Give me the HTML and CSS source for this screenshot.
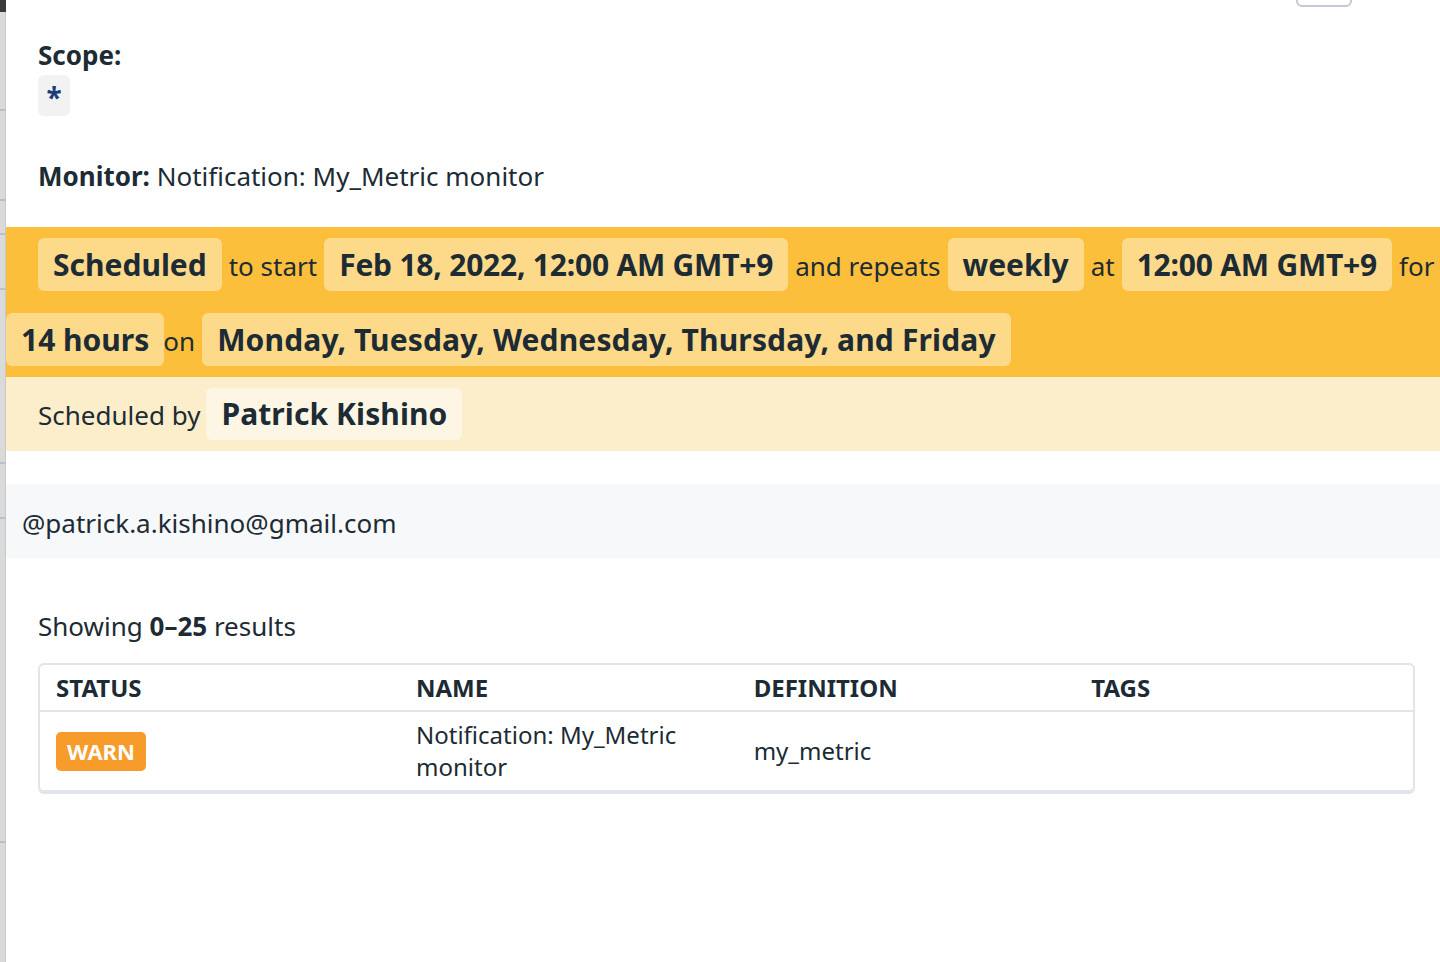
FILE: index.html
```html
<!DOCTYPE html>
<html>
	<head>
		<title>Downtime</title>
		<link rel="stylesheet" href="styles.css">
	</head>
	<body>
		<div class="rail">
			<div class="rail-top"></div>
			<div class="rail-seg" style="height: 97px"></div>
			<div class="rail-seg" style="height: 88px"></div>
			<div class="rail-seg" style="height: 32px"></div>
			<div class="rail-seg" style="height: 53px"></div>
			<div class="rail-seg" style="height: 172px"></div>
			<div class="rail-seg" style="height: 53px"></div>
			<div class="rail-seg" style="height: 322px"></div>
		</div>
		<div class="main">
			<div class="topbar">
				<div class="ghost-button"></div>
			</div>

			<div class="section">
				<div class="label">Scope:</div>
				<div class="scope-chip">*</div>
				<div class="monitor"><b>Monitor:</b> Notification: My_Metric monitor</div>
			</div>

			<div class="schedule">
				<div class="schedule-row first">
					<span class="chip">Scheduled</span>
					<span class="word">to start</span>
					<span class="chip tight">Feb 18, 2022, 12:00 AM GMT+9</span>
					<span class="word">and repeats</span>
					<span class="chip">weekly</span>
					<span class="word">at</span>
					<span class="chip tight">12:00 AM GMT+9</span>
					<span class="word">for</span>
				</div>
				<div class="schedule-row">
					<span class="chip">14 hours</span>
					<span class="word close">on</span>
					<span class="chip wide">Monday, Tuesday, Wednesday, Thursday, and Friday</span>
				</div>
			</div>
			<div class="scheduled-by">
				<span class="word">Scheduled by</span>
				<span class="chip light">Patrick Kishino</span>
			</div>

			<div class="message">@patrick.a.kishino@gmail.com</div>

			<div class="section list">
				<div class="results">Showing <b>0–25</b> results</div>
				<table class="monitors">
					<thead>
						<tr>
							<th class="col-status">Status</th>
							<th>Name</th>
							<th>Definition</th>
							<th>Tags</th>
						</tr>
					</thead>
					<tbody>
						<tr>
							<td><span class="badge warn">WARN</span></td>
							<td>Notification: My_Metric monitor</td>
							<td>my_metric</td>
							<td></td>
						</tr>
					</tbody>
				</table>
			</div>
		</div>
	</body>
</html>
```

FILE: styles.css
```css
html,
body {
	margin: 0;
	height: 100%;
}

body {
	display: flex;
	background-color: #fff;
	color: #1c2b34;
	font-family: "Noto Sans", "Open Sans", sans-serif;
	overflow: hidden;
}

.rail {
	width: 6px;
	flex: none;
	background-color: #dadada;
	box-shadow: inset -1px 0 0 #c9c9c9;
}

.rail-top {
	height: 12px;
	background-color: #3a3a3a;
}

.rail-seg {
	border-bottom: 2px solid #bcc0cc;
}

.main {
	flex: 1;
	min-width: 0;
	overflow: hidden;
}

.topbar {
	display: flex;
	justify-content: flex-end;
	height: 0;
}

.ghost-button {
	width: 52px;
	height: 30px;
	margin-top: -27px;
	margin-right: 88px;
	border: 2px solid #c5c9d5;
	border-radius: 6px;
}

.section {
	padding: 0 32px;
}

.section.list {
	padding-right: 25px;
}

.label {
	padding-top: 37px;
	font-size: 26px;
	line-height: 36px;
	font-weight: bold;
}

.scope-chip {
	width: 32px;
	height: 41px;
	margin-top: 2px;
	background-color: #f2f2f2;
	border-radius: 6px;
	color: #1a3b7c;
	font-size: 28px;
	font-weight: bold;
	line-height: 44px;
	text-align: center;
}

.monitor {
	margin-top: 42px;
	font-size: 26px;
	line-height: 36px;
}

.schedule {
	margin-top: 33px;
	padding: 11px 0;
	background-color: #fbbf3c;
}

.schedule-row {
	display: flex;
	align-items: baseline;
	gap: 7px;
	white-space: nowrap;
}

.schedule-row + .schedule-row {
	margin-top: 22px;
}

.schedule-row.first {
	padding-left: 32px;
}

.chip {
	display: inline-block;
	padding: 0 15px;
	background-color: #fdd98a;
	border-radius: 6px;
	font-size: 30px;
	font-weight: bold;
	line-height: 53px;
}

.chip.tight {
	letter-spacing: -0.22px;
}

.chip.wide {
	letter-spacing: 0.15px;
}

.chip.light {
	background-color: #fef6e4;
	line-height: 52px;
}

.word {
	font-size: 26px;
}

.word.close {
	margin-left: -8px;
}

.scheduled-by {
	display: flex;
	align-items: baseline;
	gap: 6px;
	padding: 11px 32px;
	background-color: #fdeecb;
}

.scheduled-by .chip {
	letter-spacing: 0.1px;
}

.message {
	margin-top: 33px;
	padding: 5px 16px 0;
	background-color: #f7f8fa;
	font-size: 26px;
	line-height: 69px;
}

.results {
	margin-top: 50px;
	font-size: 26px;
	line-height: 36px;
}

.results b {
	font-weight: bold;
}

.monitors {
	width: 100%;
	margin-top: 19px;
	border: 2px solid #e2e4ec;
	border-radius: 6px;
	box-shadow: 0 2px 0 #e2e4ec;
	border-spacing: 0;
	table-layout: fixed;
	font-size: 24px;
}

.monitors th {
	padding: 7px 16px 6px;
	border-bottom: 2px solid #e2e4ec;
	text-align: left;
	text-transform: uppercase;
	line-height: 32px;
	font-weight: bold;
}

.monitors .col-status {
	width: 328px;
}

.monitors td {
	padding: 7px 16px;
	line-height: 32px;
	vertical-align: middle;
}

.badge {
	display: inline-block;
	padding: 0 11px;
	border-radius: 5px;
	color: #fff;
	font-size: 22px;
	font-weight: bold;
	line-height: 39px;
	vertical-align: middle;
}

.badge.warn {
	background-color: #f79c2a;
}
```
